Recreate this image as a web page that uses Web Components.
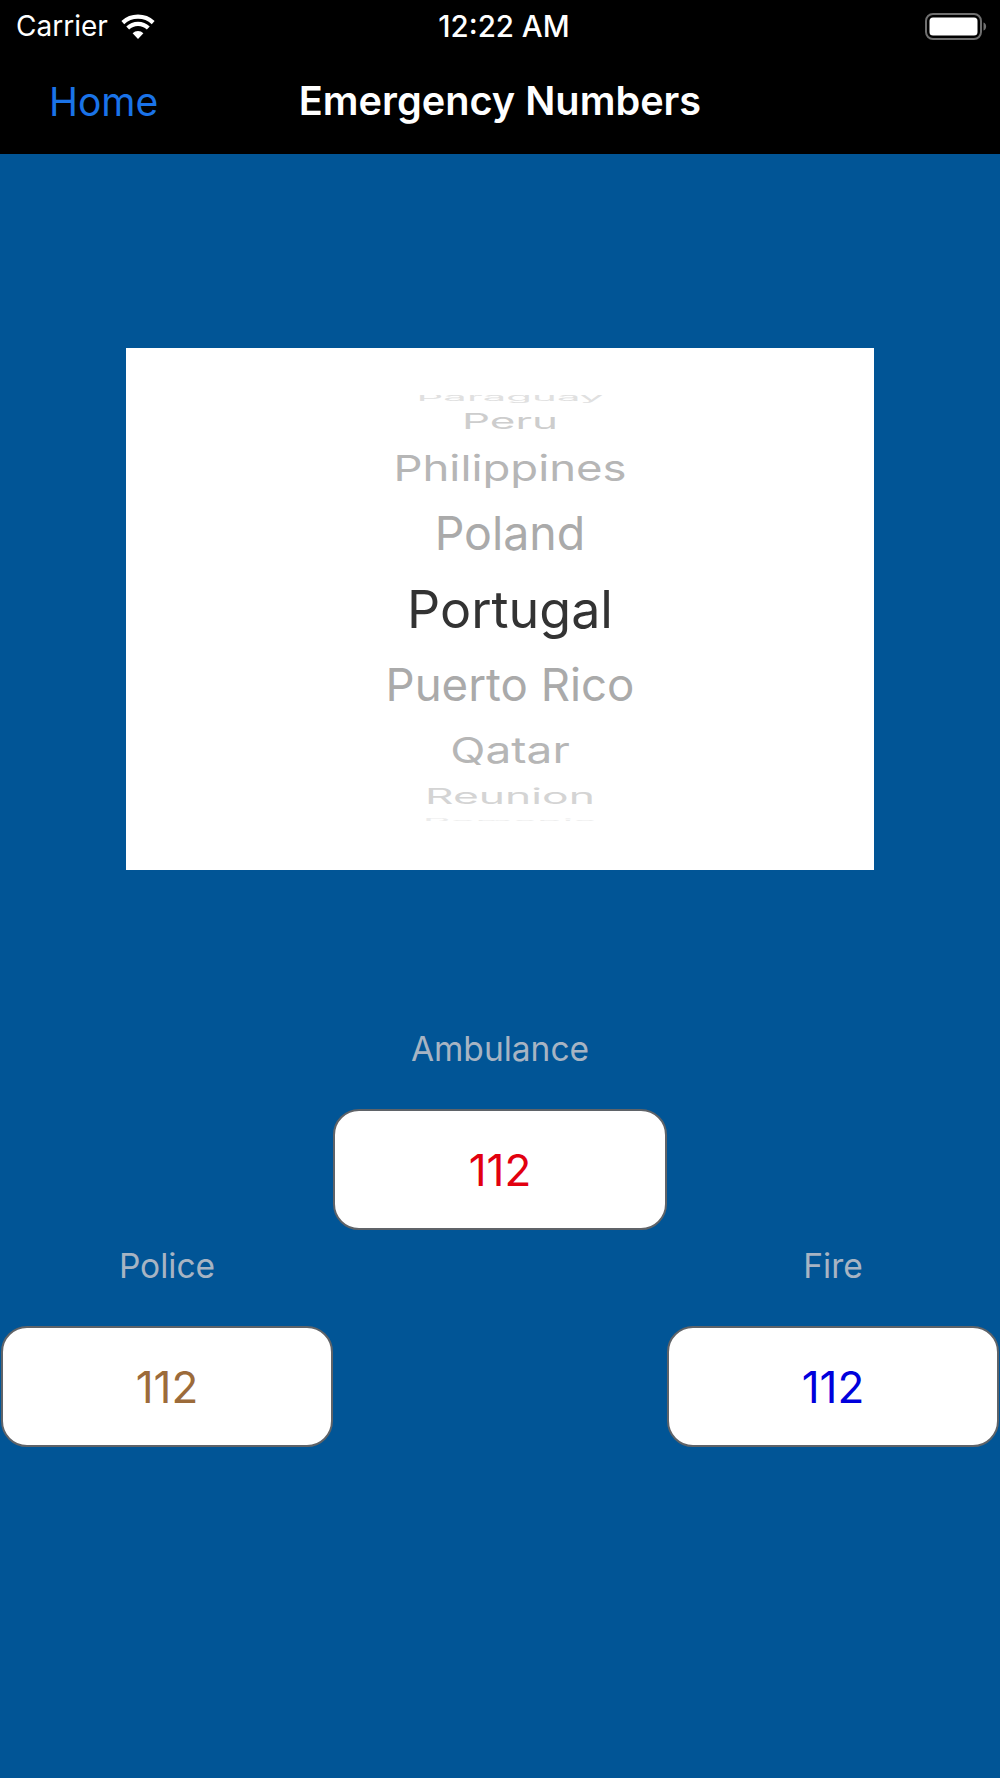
<!DOCTYPE html>
<html>
<head>
<meta charset="utf-8">
<title>Emergency Numbers</title>
<style>
  html, body { margin: 0; padding: 0; background: #015596; }
  body { font-family: Inter, "Liberation Sans", sans-serif; }
</style>
</head>
<body>
<app-page>
  <picker-row slot="wheel" h="36" fs="42" sy="0.22" dy="1" color="#e0e0e0">Paraguay</picker-row>
  <picker-row slot="wheel" h="12" fs="44" sy="0.49" color="#cdcdcd">Peru</picker-row>
  <picker-row slot="wheel" h="80" fs="45.5" sy="0.785" dy="1" color="#b6b6b6">Philippines</picker-row>
  <picker-row slot="wheel" h="52" fs="46.5" sy="1" color="#aaaaaa">Poland</picker-row>
  <picker-row slot="wheel" h="98" fs="52" sy="1" dy="2" color="#333333">Portugal</picker-row>
  <picker-row slot="wheel" h="56" fs="45.6" sy="1" color="#aaaaaa">Puerto Rico</picker-row>
  <picker-row slot="wheel" h="72" fs="46" sy="0.776" dy="1" color="#b6b6b6">Qatar</picker-row>
  <picker-row slot="wheel" h="22" fs="44.4" sy="0.486" color="#d4d4d4">Reunion</picker-row>
  <picker-row slot="wheel" h="22" fs="43" sy="0.167" dy="3" color="#ececec">Romania</picker-row>

  <number-field slot="fields" style="grid-column: 2; grid-row: 1" label="Ambulance" color="#e2000f">112</number-field>
  <number-field slot="fields" style="grid-column: 1; grid-row: 2" label="Police" color="#9c6b3a">112</number-field>
  <number-field slot="fields" style="grid-column: 3; grid-row: 2" label="Fire" color="#0000dc">112</number-field>
</app-page>

<script>
//Status bar: carrier + wifi on the left, clock in the middle, battery on the right
class StatusBar extends HTMLElement {
    constructor() {
        super();
        this.attachShadow({ mode: "open" });
        this.shadowRoot.innerHTML = `
            <style>
                :host {
                    display: grid;
                    grid-template-columns: 1fr auto 1fr;
                    align-items: center;
                    height: 52px;
                    padding: 0 12px 0 16px;
                    color: #fff;
                    font-size: 28px;
                }
                .left { display: flex; align-items: center; gap: 13px; }
                .time { font-weight: 500; font-size: 29.5px; margin-left: 4px; }
                .battery { justify-self: end; display: block; }
                .wifi { display: block; }
            </style>
            <div class="left">
                <span>Carrier</span>
                <svg class="wifi" width="34" height="25" viewBox="0 0 34 25">
                    <path d="M17 25 L11.6 19.2 A8 8 0 0 1 22.4 19.2 Z" fill="#fff"/>
                    <path d="M6.7 14 A15 15 0 0 1 27.3 14" fill="none" stroke="#fff" stroke-width="4.2"/>
                    <path d="M1.8 8.6 A22.5 22.5 0 0 1 32.2 8.6" fill="none" stroke="#fff" stroke-width="4.2"/>
                </svg>
            </div>
            <span class="time">12:22 AM</span>
            <svg class="battery" width="63" height="27" viewBox="0 0 63 27">
                <rect x="1" y="1" width="55" height="25" rx="7" fill="none" stroke="#6f6f6f" stroke-width="2"/>
                <rect x="4.5" y="4.5" width="48" height="18" rx="3.5" fill="#fff"/>
                <path d="M58.5 9.5 C62 10.5 62 16.5 58.5 17.5 Z" fill="#6f6f6f"/>
            </svg>
        `;
    }
}
customElements.define("status-bar", StatusBar);

//Navigation bar, title sits in the middle column
class NavBar extends HTMLElement {
    constructor() {
        super();
        this.attachShadow({ mode: "open" });
        this.shadowRoot.innerHTML = `
            <style>
                :host {
                    display: grid;
                    grid-template-columns: 1fr auto 1fr;
                    align-items: center;
                    height: 98px;
                    padding: 0 49px 4px 49px;
                    font-size: 39px;
                    color: #fff;
                }
                .back { color: #1a73e8; }
                .title { font-weight: 600; font-size: 39.7px; }
            </style>
            <span class="back">Home</span>
            <span class="title"><slot></slot></span>
            <span></span>
        `;
    }
}
customElements.define("nav-bar", NavBar);

//One line of the picker wheel, squashed the way the wheel's curve squashes it
class PickerRow extends HTMLElement {
    constructor() {
        super();
        this.attachShadow({ mode: "open" });
        this.shadowRoot.innerHTML = `
            <style>
                :host {
                    display: flex;
                    justify-content: center;
                    align-items: center;
                    height: var(--h);
                }
                span {
                    display: block;
                    white-space: nowrap;
                    line-height: 1;
                    font-size: var(--fs);
                    color: var(--color);
                    transform: translateY(var(--dy)) scaleY(var(--sy));
                }
            </style>
            <span><slot></slot></span>
        `;
    }
    connectedCallback() {
        this.style.setProperty("--h", this.getAttribute("h") + "px");
        this.style.setProperty("--fs", this.getAttribute("fs") + "px");
        this.style.setProperty("--sy", this.getAttribute("sy"));
        this.style.setProperty("--dy", (this.getAttribute("dy") || 0) + "px");
        this.style.setProperty("--color", this.getAttribute("color"));
    }
}
customElements.define("picker-row", PickerRow);

//Label with a rounded white number box under it
class NumberField extends HTMLElement {
    constructor() {
        super();
        this.attachShadow({ mode: "open" });
        this.shadowRoot.innerHTML = `
            <style>
                :host {
                    display: flex;
                    flex-direction: column;
                    align-items: stretch;
                    gap: 40px;
                    text-align: center;
                }
                .label {
                    height: 41px;
                    line-height: 42px;
                    font-size: 33.5px;
                    color: #a7b4c3;
                }
                .box {
                    box-sizing: border-box;
                    height: 121px;
                    display: flex;
                    align-items: center;
                    justify-content: center;
                    background: #fff;
                    border: 2px solid #5f6368;
                    border-radius: 26px;
                    font-size: 44px;
                }
            </style>
            <div class="label"></div>
            <div class="box"><slot></slot></div>
        `;
    }
    connectedCallback() {
        this.shadowRoot.querySelector(".label").textContent = this.getAttribute("label");
        this.shadowRoot.querySelector(".box").style.color = this.getAttribute("color");
    }
}
customElements.define("number-field", NumberField);

//The whole screen
class AppPage extends HTMLElement {
    constructor() {
        super();
        this.attachShadow({ mode: "open" });
        this.shadowRoot.innerHTML = `
            <style>
                :host {
                    display: block;
                    height: 1778px;
                    overflow: hidden;
                    background: #015596;
                }
                header { background: #000; }
                .picker {
                    margin: 194px 126px 0 126px;
                    height: 522px;
                    padding: 47px 0 0 20px;
                    box-sizing: border-box;
                    background: #fff;
                }
                .wheel { height: 426px; overflow: hidden; }
                .rows { margin-top: -16px; }
                .fields {
                    margin-top: 158px;
                    padding: 0 1px;
                    display: grid;
                    grid-template-columns: 332px 334px 332px;
                    row-gap: 15px;
                }
            </style>
            <header>
                <status-bar></status-bar>
                <nav-bar>Emergency Numbers</nav-bar>
            </header>
            <div class="picker">
                <div class="wheel"><div class="rows"><slot name="wheel"></slot></div></div>
            </div>
            <div class="fields"><slot name="fields"></slot></div>
        `;
    }
}
customElements.define("app-page", AppPage);
</script>
</body>
</html>
